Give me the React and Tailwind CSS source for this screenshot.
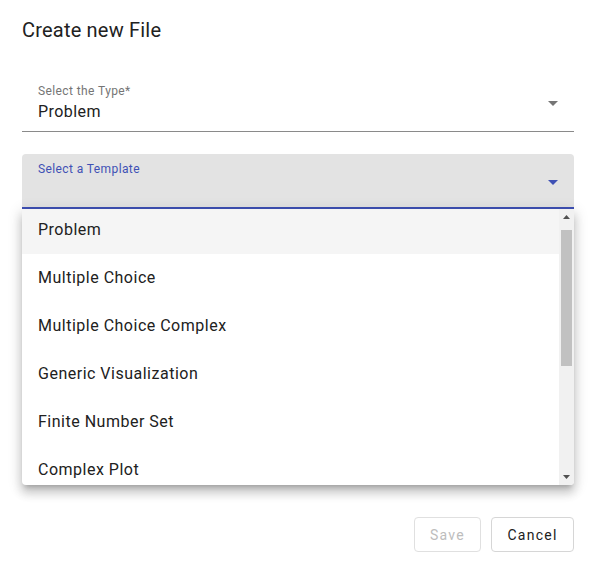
import React from "react";

const items = [
  "Problem",
  "Multiple Choice",
  "Multiple Choice Complex",
  "Generic Visualization",
  "Finite Number Set",
  "Complex Plot",
];

function Caret({ className }) {
  return (
    <svg viewBox="0 0 24 24" className={className} fill="currentColor">
      <path d="M7 10l5 5 5-5z" />
    </svg>
  );
}

export default function App() {
  return (
    <div className="w-[596px] h-[562px] bg-white flex flex-col font-['Roboto','Liberation_Sans',sans-serif] text-[#212121]">
      <h2 className="px-[22px] pt-[14px] text-[20px] leading-[32px] font-normal tracking-[0.2px] text-[#212121]">
        Create new File
      </h2>

      <div className="px-[22px] mt-[29px] flex flex-col gap-[22px]">
        {/* Field 1 */}
        <div className="h-[57px] bg-white border-b border-[#8a8a8a] flex items-start justify-between pl-[16px]">
          <div className="flex flex-col pt-[8px]">
            <span className="text-[12px] leading-[16px] text-[#757575] tracking-[0.4px]">
              Select the Type*
            </span>
            <span className="mt-[3px] text-[16px] leading-[19px] tracking-[0.45px] text-[#212121]">
              Problem
            </span>
          </div>
          <Caret className="w-[24px] h-[24px] mt-[16px] mr-[9px] text-[#757575]" />
        </div>

        {/* Field 2 */}
        <div className="relative">
          <div className="h-[55px] bg-[#e3e3e3] rounded-t-[4px] border-b-2 border-[#3f51b5] flex items-start justify-between pl-[16px]">
            <span className="pt-[7px] text-[12px] leading-[16px] text-[#3f51b5] tracking-[0.4px]">
              Select a Template
            </span>
            <Caret className="w-[24px] h-[24px] mt-[16px] mr-[9px] text-[#3f51b5]" />
          </div>

          {/* Menu popover */}
          <div className="absolute left-0 right-0 top-full h-[276px] bg-white rounded-b-[4px] overflow-hidden flex shadow-[0px_5px_5px_-3px_rgba(0,0,0,0.2),0px_8px_10px_1px_rgba(0,0,0,0.14),0px_3px_14px_2px_rgba(0,0,0,0.12)] z-10">
            <div className="flex-1 overflow-hidden">
              <ul className="-mt-[3px]">
                {items.map((it, i) => (
                  <li
                    key={it}
                    className={`h-[48px] flex items-center px-[16px] text-[16px] leading-[24px] tracking-[0.5px] text-[#212121] ${
                      i === 0 ? "bg-[#f5f5f5]" : ""
                    }`}
                  >
                    {it}
                  </li>
                ))}
              </ul>
            </div>
            <div className="w-[15px] h-full bg-[#f1f1f1] flex flex-col items-center">
              <svg viewBox="0 0 15 15" className="w-[15px] h-[15px] shrink-0" fill="#505050">
                <path d="M4 10 L7.5 6 L11 10 Z" />
              </svg>
              <div className="mt-[6px] w-[11px] h-[136px] bg-[#c1c1c1]" />
              <svg viewBox="0 0 15 15" className="mt-auto w-[15px] h-[15px] shrink-0" fill="#505050">
                <path d="M4 5 L11 5 L7.5 9 Z" />
              </svg>
            </div>
          </div>
        </div>
      </div>

      <div className="mt-auto flex justify-end gap-[10px] px-[22px] pb-[10px]">
        <button className="w-[67px] h-[35px] pt-[2px] rounded-[4px] border border-[#e0e0e0] text-[14px] tracking-[1.25px] text-[#bdbdbd] bg-white">
          Save
        </button>
        <button className="w-[83px] h-[35px] pt-[2px] rounded-[4px] border border-[#d6d6d6] text-[14px] tracking-[1.25px] text-[#212121] bg-white">
          Cancel
        </button>
      </div>
    </div>
  );
}
